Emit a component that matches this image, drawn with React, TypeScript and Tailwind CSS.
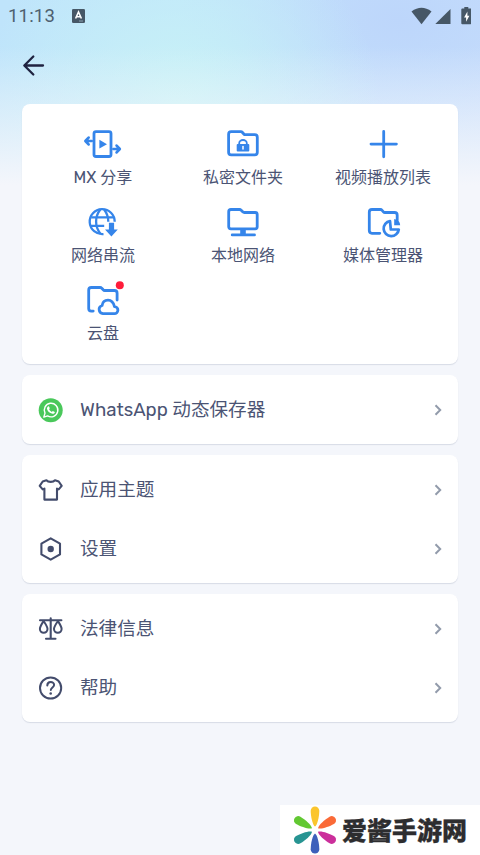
import type { ReactNode } from 'react';

// ============================================================================
// Types & Interfaces
// ============================================================================

interface Item {
  label: string;
  icon: ReactNode;
}

// ============================================================================
// Shortcut icons (40x36 canvas)
// ============================================================================

function ToolIcon({ children }: { children: ReactNode }) {
  return (
    <svg
      width="40"
      height="36"
      viewBox="0 0 40 36"
      fill="none"
      stroke="#3585ea"
      strokeWidth="2.8"
      strokeLinejoin="round"
      strokeLinecap="round"
      className="overflow-visible"
    >
      {children}
    </svg>
  );
}

const tools: Item[] = [
  {
    label: 'MX 分享',
    icon: (
      <ToolIcon>
        <rect x="11" y="5.6" width="17" height="24.9" rx="2" />
        <path d="M16.4 13.8v8.800l7.600-4.400z" fill="#3585ea" stroke="none" />
        <path d="M8.700 15H3M5.600 11.600L2.400 15l3.200 3.400M30.400 23h5.800M33.600 19.600L36.800 23l-3.200 3.400" strokeWidth="2.700" />
      </ToolIcon>
    ),
  },
  {
    label: '私密文件夹',
    icon: (
      <ToolIcon>
        <path d="M8.200 5.700h9.600q1 0 1.700.8l1.300 1.500q.6.700 1.600.7h9.300q2.600 0 2.600 2.600v15q0 2.600-2.600 2.600H8.200q-2.600 0-2.600-2.600V8.300q0-2.600 2.600-2.600z" />
        <path d="M16.200 18.400v-1.200a3.800 3.200 0 0 1 7.600 0v1.200" strokeWidth="1.800" />
        <rect x="13.700" y="17.900" width="12.600" height="7.500" rx="1" fill="#3585ea" stroke="none" />
        <path d="M20 20.600v2.400" stroke="white" strokeWidth="1.500" />
      </ToolIcon>
    ),
  },
  {
    label: '视频播放列表',
    icon: (
      <ToolIcon>
        <path d="M20.700 5.400v25.400M8 18.100h25.400" />
      </ToolIcon>
    ),
  },
  {
    label: '网络串流',
    icon: (
      <ToolIcon>
        <g strokeWidth="2.300" strokeLinecap="butt">
          <path d="M20.500 30.100A12.500 12.500 0 1 1 31.700 17.800" />
          <path d="M8.200 13.400h22.400M7.700 21.800h13.500M17.300 5.500c-5.600 7.200-5.600 17 0 24.200M21.100 5.500c2.800 3.600 4.200 7.800 4.200 12.300" />
        </g>
        <path d="M25.900 18.800h5.200v6.700h3.700L28.400 32.600L22 25.500h3.900z" fill="#3585ea" stroke="none" />
      </ToolIcon>
    ),
  },
  {
    label: '本地网络',
    icon: (
      <ToolIcon>
        <path d="M8 5.500h8.500q1 0 1.700.8l1.500 1.500q.7.700 1.700.7h10.800q2 0 2 2v12.300q0 2-2 2H8q-2.300 0-2.300-2.300V7.800Q5.700 5.500 8 5.500z" />
        <path d="M20 26v4" strokeWidth="5.600" strokeLinecap="butt" />
        <path d="M9.200 30.900h22.300" />
      </ToolIcon>
    ),
  },
  {
    label: '媒体管理器',
    icon: (
      <ToolIcon>
        <path d="M16.800 29.300H9q-2.700 0-2.700-2.700V8.200q0-2.700 2.700-2.700h8.400q1 0 1.700.8l1.300 1.500q.6.700 1.600.7h9.500q2.700 0 2.700 2.700v5" />
        <path d="M27 17.100A7.600 7.600 0 1 0 35.800 25.500h-8z" strokeWidth="2.700" />
        <path d="M31.200 15v6.300h6q-.2-5.400-6-6.300z" fill="#3585ea" stroke="none" />
      </ToolIcon>
    ),
  },
  {
    label: '云盘',
    icon: (
      <ToolIcon>
        <path d="M10.200 29.100H8.300q-2.600 0-2.600-2.600V8.100q0-2.600 2.600-2.600h8.800q1 0 1.700.8l1.400 1.500q.6.700 1.600.7h9.600q2.700 0 2.700 2.700v6.900" />
        <path d="M20 31.700h11.300a3.500 3.500 0 0 0 .2-7c-.9-4-3.300-6.600-6.500-6.600-3.300 0-5.500 2.300-5.900 5.400a4.200 4.200 0 0 0 .9 8.200z" />
        <circle cx="36.800" cy="3.300" r="4" fill="#ff1c3a" stroke="none" />
      </ToolIcon>
    ),
  },
];

// ============================================================================
// Menu icons (26x26 canvas)
// ============================================================================

function MenuIcon({ children }: { children: ReactNode }) {
  return (
    <svg
      width="26"
      height="26"
      viewBox="0 0 26 26"
      fill="none"
      stroke="#434c6c"
      strokeWidth="2"
      strokeLinejoin="round"
      strokeLinecap="round"
    >
      {children}
    </svg>
  );
}

const menuGroups: Item[][] = [
  [
    {
      label: 'WhatsApp 动态保存器',
      icon: (
        <MenuIcon>
          <circle cx="12.700" cy="13.200" r="12" fill="#4ac85b" stroke="none" />
          <path d="M5.800 20.100l1.200-4A6.800 6.800 0 1 1 9.600 18.900z" stroke="white" strokeWidth="1.400" />
          <path
            d="M10 9.400l.9-.2.900 2-.7 1.100c.6 1.300 1.400 2 2.700 2.600l1-1 2 1c.2 1.200-1.100 2.100-2.300 1.900-2.900-.5-5.300-2.700-5.600-5.300 0-.8.400-1.600 1.100-2.100z"
            fill="white"
            stroke="none"
          />
        </MenuIcon>
      ),
    },
  ],
  [
    {
      label: '应用主题',
      icon: (
        <MenuIcon>
          <path d="M8.400 3.300c1.800 2.100 6.800 2.100 8.600 0l3.700 1.200 3 4.400-3 3.500-1.700-.8v11H6.400v-11l-1.700.8-3-3.500 3-4.400z" strokeWidth="2.100" />
        </MenuIcon>
      ),
    },
    {
      label: '设置',
      icon: (
        <MenuIcon>
          <path d="M12.700 2.300l9.300 5.300v10.800l-9.300 5.300-9.300-5.300V7.600z" strokeWidth="2.100" />
          <circle cx="12.700" cy="13" r="3.200" fill="#434c6c" stroke="none" />
        </MenuIcon>
      ),
    },
  ],
  [
    {
      label: '法律信息',
      icon: (
        <MenuIcon>
          <path d="M12.700 2.300v20.500M8 22.800h9.500M2 4.300h21.400" strokeWidth="2.100" />
          <path d="M5.600 5c-1.500 2.500-3.700 5.400-3.700 8a3.800 3.800 0 0 0 7.600 0c0-2.600-2.400-5.500-3.900-8zM19.900 5c-1.500 2.500-3.900 5.400-3.900 8a3.800 3.800 0 0 0 7.600 0c0-2.600-2.200-5.500-3.700-8z" strokeWidth="2" />
        </MenuIcon>
      ),
    },
    {
      label: '帮助',
      icon: (
        <MenuIcon>
          <circle cx="12.600" cy="13" r="10.600" />
          <path d="M9.300 10.600c0-4.600 6.800-4.500 6.800-.6 0 2.300-3.300 2.600-3.300 5" />
          <circle cx="12.700" cy="18.500" r="1.300" fill="#434c6c" stroke="none" />
        </MenuIcon>
      ),
    },
  ],
];

// ============================================================================
// Sections
// ============================================================================

function StatusBar() {
  return (
    <div className="flex h-8 items-center pl-[8px] pr-[9px] text-[#4e606f]">
      <span className="mt-px font-[Roboto] text-[18.5px] leading-none tracking-[0.2px]">11:13</span>
      <svg width="13" height="14" viewBox="0 0 13 14" className="ml-[17px]">
        <rect width="13" height="14" rx="1.300" fill="#465766" />
        <path d="M3.600 9.500L6.500 3l2.900 6.500M4.600 7.800h3.800" fill="none" stroke="white" strokeWidth="1.600" />
        <path d="M7 12h4" stroke="#8ba3b2" strokeWidth="1" />
      </svg>
      <svg width="61" height="20" viewBox="0 0 61 20" className="ml-auto" fill="#465766">
        <path d="M1.500 5.500q10-7.500 20 0l-10 12.800z" />
        <path d="M40.500 3v15H25.300z" />
        <path d="M54.300 1h4v1.500h2.200q1 0 1 1v13.700q0 1-1 1h-8.200q-1 0-1-1V3.500q0-1 1-1h2z" />
        <path d="M57.400 5.500l-3.300 6h2v4.300l3.300-6h-2z" fill="white" />
      </svg>
    </div>
  );
}

function MenuRow({ label, icon }: Item) {
  return (
    <button className="flex h-[59px] w-full items-center pl-4 pr-[16px] text-left">
      {icon}
      <span className="ml-4 whitespace-nowrap text-[18.600px] leading-7">{label}</span>
      <svg width="9" height="14" viewBox="0 0 9 14" fill="none" stroke="#929bab" strokeWidth="2" className="ml-auto">
        <path d="M2.500 2.300L7.200 7L2.500 11.700" />
      </svg>
    </button>
  );
}

function Watermark() {
  const petals = ['#fbc52d', '#fa6a37', '#cb2f9b', '#3d60bb', '#279492', '#62c832'];

  return (
    <div className="absolute bottom-0 right-0 flex h-[50px] w-[200px] items-center bg-white pl-[11px]">
      <svg width="48" height="50" viewBox="-24 -25 48 50">
        {petals.map((color, i) => (
          <path
            key={color}
            d="M0-3.500C-2.500-5-4.300-14-4.300-19.300a4.300 4.300 0 0 1 8.600 0C4.300-14 2.500-5 0-3.500z"
            fill={color}
            transform={`rotate(${i * 60})`}
          />
        ))}
      </svg>
      <span className="ml-[3px] mt-0.5 whitespace-nowrap text-[25px] font-black leading-none text-[#2d2d2f] [-webkit-text-stroke:0.3px_#2d2d2f]">
        爱酱手游网
      </span>
    </div>
  );
}

// ============================================================================
// Component
// ============================================================================

export default function App() {
  return (
    <div className="relative h-[855px] w-[480px] overflow-hidden bg-[#f4f6fb] font-['Rubik','Roboto','Noto_Sans_CJK_SC',sans-serif] text-[#4b5474]">
      {/* Sky coloured header glow */}
      <div className="absolute inset-x-0 top-0 h-[185px] bg-[linear-gradient(to_bottom,transparent_25%,#f4f6fb_100%),radial-gradient(ellipse_200px_180px_at_180px_100px,#c8f2f6,#c8f2f600),radial-gradient(ellipse_220px_140px_at_400px_20px,#bdd6fb,#bdd6fb00),linear-gradient(to_right,#bfe4fb_0%,#c0e6fb_50%,#c8dffc_100%)]" />

      <div className="relative">
        <StatusBar />

        <header className="flex h-[72px] items-start pl-[22px] pt-[22px]">
          <svg width="23" height="23" viewBox="0 0 23 23" fill="none" stroke="#202341" strokeWidth="2.300" strokeLinecap="round" strokeLinejoin="round">
            <path d="M21 11.500H2.500M11.300 2.500L2.300 11.500L11.300 20.500" />
          </svg>
        </header>

        <main className="flex flex-col gap-[11px] px-[22px]">
          <section className="grid h-[260px] auto-rows-[78px] grid-cols-3 rounded-[8px] bg-white pl-[11px] pr-[5px] pt-[22px] shadow-[0_1px_1px_rgba(60,80,120,0.16)]">
            {tools.map((tool) => (
              <div key={tool.label} className="flex flex-col items-center">
                {tool.icon}
                <span className="mt-1 whitespace-nowrap text-[16px] leading-6">{tool.label}</span>
              </div>
            ))}
          </section>

          {menuGroups.map((group) => (
            <section
              key={group[0].label}
              className="rounded-[8px] bg-white py-[5px] shadow-[0_1px_1px_rgba(60,80,120,0.16)]"
            >
              {group.map((item) => (
                <MenuRow key={item.label} {...item} />
              ))}
            </section>
          ))}
        </main>
      </div>

      <Watermark />
    </div>
  );
}
